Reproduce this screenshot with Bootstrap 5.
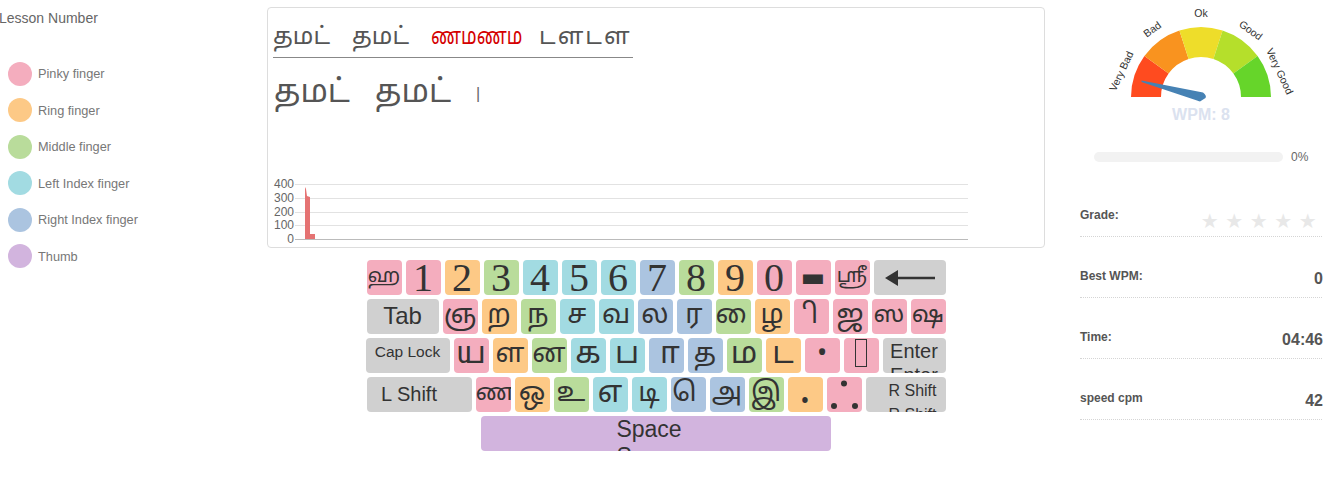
<!DOCTYPE html>
<html lang="ta">
<head>
<meta charset="utf-8">
<title>Typing lesson</title>
<link href="https://cdn.jsdelivr.net/npm/bootstrap@5.3.0/dist/css/bootstrap.min.css" rel="stylesheet">
<style>
html,body{height:492px;overflow:hidden;background:#fff}
body{font-family:"Liberation Sans",Arial,sans-serif;color:#333;font-size:12px}
.leftcol{width:267px;flex:none;color:#777;font-size:12.75px}
.lessonlbl{font-size:14px;line-height:16px;margin:10px 0 0 -1px;color:#666}
.legend{margin:29.5px 0 0 8px}
.legrow{height:36.5px;display:flex;align-items:center;gap:6px}
.legdot{width:24px;height:24px;border-radius:50%;flex:none}
.midcol{width:778px;flex:none;padding-top:7px}
.typecard{height:241px;border-color:#ddd;border-radius:4px;padding:0 5px;overflow:hidden}
.srcline{font-family:"Noto Sans Tamil","Lohit Tamil","Liberation Sans",sans-serif;font-size:24px;line-height:38px;height:44px;margin-top:6px;width:360px;border-bottom:1px solid #888;color:#555;padding-top:5px;gap:22px}
.srcline span{white-space:nowrap;flex:none}
.narrowred{display:inline-block;width:90px;transform:scaleX(.76);transform-origin:left center;color:#d40000;margin-right:-4px}
.widegrp{letter-spacing:2px}
.typedline{font-family:"Noto Sans Tamil","Lohit Tamil","Liberation Sans",sans-serif;font-size:32px;line-height:50px;height:111px;margin-top:7px;color:#555;padding:4px 0 0 1px;gap:25px}
.typedline span{flex:none}
.caretbar{font-size:16px;font-family:"Liberation Sans",sans-serif;color:#666}
.speedchart{display:block;margin:0 0 0 -5px}
.kboard{width:579px;margin:12px auto 0;display:flex;flex-direction:column;gap:4px}
.kbrow{display:flex;gap:4px;justify-content:space-between}
.kbkey{flex:none;width:35px;height:35px;border-radius:4px;overflow:hidden;text-align:center;color:#333;font-family:"Noto Sans Tamil","Lohit Tamil","Liberation Sans",sans-serif;font-size:27px;line-height:35px}
.kbkey svg{display:block}
.t-s{font-size:20px}
.t-m{font-size:24px}
.t-l{font-size:31px}
.numkey{font-family:"Liberation Serif",serif;font-size:40px;line-height:36px}
.barkey{font-family:"DejaVu Sans",sans-serif;font-size:26px}
.bigdot{font-size:44px;line-height:30px}
.tofubox{display:inline-block;width:12px;height:28px;border:1px solid #333;vertical-align:middle;margin-top:-3px}
.ctl{background:#d0d0d0;font-family:"Liberation Sans",sans-serif;color:#333}
.c-p{background:#f4adbe}.c-r{background:#fdc986}.c-m{background:#b9dc9b}.c-l{background:#a2dbe2}.c-i{background:#abc4e0}.c-t{background:#d2b4de}
.bkspk{width:72px;display:flex;align-items:center;justify-content:center}
.tabk{width:72px;font-size:24px;line-height:33px}
.capk{width:84px;font-size:15.5px;line-height:28px;margin-left:-1px}
.entk{width:63px;font-size:20px;line-height:24px;padding-top:1px}
.lsk{width:105px;font-size:20px;line-height:35px;padding-right:20px}
.rsk{width:80px;font-size:16px;line-height:24px;padding:2px 0 0 14px}
.spk{width:350px;background:#d2b4de;font-family:"Liberation Sans",sans-serif;font-size:23px;line-height:27px;padding-right:14px}
.rightcol{width:242px;margin-left:35px;flex:none}
.gaugesvg{display:block}
.pctrow{margin:21px 0 0 14px;display:flex;align-items:center;gap:8px;height:12px;color:#666}
.pctrow .progress{width:189px;height:10px;border-radius:5px;background:#f2f2f2}
.statlist{margin-top:35px}
.statrow{height:61px;display:flex;justify-content:space-between;border-bottom:1px dotted #d5d5d5;padding-top:32px;color:#555}
.statname{font-weight:700;font-size:12px;line-height:14px}
.statval{font-weight:700;font-size:16px;line-height:18px;margin-right:-1px;margin-top:1px}
.firststat{height:39px;padding-top:10px}
.starset{color:#e8e8e8;font-family:"DejaVu Sans",sans-serif;font-size:20px;line-height:20px;display:flex;gap:4px;margin:3px 4px 0 0}
.starset span{width:20.5px;text-align:center}
</style>
</head>
<body>
<div class="d-flex">
  <div class="leftcol">
    <div class="lessonlbl">Lesson Number</div>
    <div class="legend">
      <div class="legrow"><span class="legdot c-p"></span>Pinky finger</div>
      <div class="legrow"><span class="legdot c-r"></span>Ring finger</div>
      <div class="legrow"><span class="legdot c-m"></span>Middle finger</div>
      <div class="legrow"><span class="legdot c-l"></span>Left Index finger</div>
      <div class="legrow"><span class="legdot c-i"></span>Right Index finger</div>
      <div class="legrow"><span class="legdot c-t"></span>Thumb</div>
    </div>
  </div>
  <div class="midcol">
    <div class="card typecard">
      <div class="srcline d-flex"><span>தமட்</span><span>தமட்</span><span class="narrowred">ணமணம</span><span class="widegrp">டளடள</span></div>
      <div class="typedline d-flex"><span>தமட்</span><span>தமட்</span><span class="caretbar">|</span></div>
      <svg class="speedchart" width="776" height="70" viewBox="0 0 776 70">
        <path d="M27 8.5H700M27 22.5H700M27 36.5H700M27 49.5H700" stroke="#e2e2e2"/>
        <path d="M27 63.5H700" stroke="#bbb"/>
        <path d="M37 11L38 13L39 20L42 21L42 58L47 58L47 63H37Z" fill="#e57373"/>
        <g font-family="Liberation Sans" font-size="12" fill="#666" text-anchor="end">
          <text x="26" y="12">400</text><text x="26" y="26">300</text><text x="26" y="40">200</text><text x="26" y="53">100</text><text x="26" y="67">0</text>
        </g>
      </svg>
    </div>
    <div class="kboard">
      <div class="kbrow">
        <div class="kbkey t-s c-p">ஹ</div><div class="kbkey numkey c-p">1</div><div class="kbkey numkey c-r">2</div><div class="kbkey numkey c-m">3</div><div class="kbkey numkey c-l">4</div><div class="kbkey numkey c-l">5</div><div class="kbkey numkey c-l">6</div><div class="kbkey numkey c-i">7</div><div class="kbkey numkey c-m">8</div><div class="kbkey numkey c-r">9</div><div class="kbkey numkey c-p">0</div><div class="kbkey barkey c-p">▬</div><div class="kbkey t-s c-p">ஸ்ரீ</div><div class="kbkey ctl bkspk" role="img" aria-label="Backspace"><svg width="50" height="16" viewBox="0 0 50 16"><path d="M0 8L13 0V6.7H50V9.3H13V16Z" fill="#333"/></svg></div>
      </div>
      <div class="kbrow">
        <div class="kbkey ctl tabk">Tab</div><div class="kbkey c-p">ஞ</div><div class="kbkey c-r">ற</div><div class="kbkey c-m">ந</div><div class="kbkey c-l">ச</div><div class="kbkey c-l">வ</div><div class="kbkey c-i">ல</div><div class="kbkey c-i">ர</div><div class="kbkey c-m">&nbsp;ை</div><div class="kbkey c-r">ழ</div><div class="kbkey c-p">&nbsp;ி</div><div class="kbkey c-p">ஜ</div><div class="kbkey t-m c-p">ஸ</div><div class="kbkey t-m c-p">ஷ</div>
      </div>
      <div class="kbrow">
        <div class="kbkey ctl capk">Cap Lock<br>Cap Lock</div><div class="kbkey t-l c-p">ய</div><div class="kbkey c-r">ள</div><div class="kbkey c-m">ன</div><div class="kbkey t-l c-l">க</div><div class="kbkey t-l c-l">ப</div><div class="kbkey t-l c-i">&nbsp;ா</div><div class="kbkey c-i">த</div><div class="kbkey t-l c-m">ம</div><div class="kbkey t-l c-r">ட</div><div class="kbkey c-p">•</div><div class="kbkey c-p"><span class="tofubox"></span></div><div class="kbkey ctl entk">Enter<br>Enter</div>
      </div>
      <div class="kbrow">
        <div class="kbkey ctl lsk">L Shift<br>L Shift</div><div class="kbkey t-m c-p">ண</div><div class="kbkey c-r">ஒ</div><div class="kbkey c-m">உ</div><div class="kbkey t-l c-l">எ</div><div class="kbkey c-l">டி</div><div class="kbkey c-i">&nbsp;ெ</div><div class="kbkey c-i">அ</div><div class="kbkey c-m">இ</div><div class="kbkey bigdot c-r">.</div><div class="kbkey c-p" role="img" aria-label="ஃ"><svg width="35" height="35" viewBox="0 0 35 35"><g fill="#333"><circle cx="17" cy="6.5" r="3"/><circle cx="7" cy="29" r="3"/><circle cx="28" cy="29" r="3"/></g></svg></div><div class="kbkey ctl rsk">R Shift<br>R Shift</div>
      </div>
      <div class="kbrow justify-content-center">
        <div class="kbkey spk">Space<br>Space</div>
      </div>
    </div>
  </div>
  <div class="rightcol">
    <svg class="gaugesvg" width="242" height="130" viewBox="0 0 242 130">
      <path d="M51 97A70 70 0 0 1 64.4 55.9L88.6 73.5A40 40 0 0 0 81 97Z" fill="#ff4b1f"/>
      <path d="M64.4 55.9A70 70 0 0 1 99.4 30.4L108.6 58.96A40 40 0 0 0 88.6 73.5Z" fill="#f9931f"/>
      <path d="M99.4 30.4A70 70 0 0 1 142.6 30.4L133.4 58.96A40 40 0 0 0 108.6 58.96Z" fill="#eedd2a"/>
      <path d="M142.6 30.4A70 70 0 0 1 177.6 55.9L153.4 73.5A40 40 0 0 0 133.4 58.96Z" fill="#b5df2b"/>
      <path d="M177.6 55.9A70 70 0 0 1 191 97H161A40 40 0 0 0 153.4 73.5Z" fill="#66d52a"/>
      <path d="M61.5 80.5L123 92.5Q127 95.5 125.5 98L120 101.5Q118 101 117 100.5L61.5 82Z" fill="#4682b4"/>
      <g font-family="Liberation Sans" font-size="10.5" fill="#333" text-anchor="middle">
        <text transform="translate(41 71) rotate(-65)" y="4">Very Bad</text>
        <text transform="translate(72 29) rotate(-36)" y="4">Bad</text>
        <text x="121" y="17">Ok</text>
        <text transform="translate(171 30) rotate(36)" y="4">Good</text>
        <text transform="translate(200 71) rotate(65)" y="4">Very Good</text>
      </g>
      <text x="121" y="120" font-family="Liberation Sans" font-weight="700" font-size="16" fill="#dbe2ef" text-anchor="middle">WPM: 8</text>
    </svg>
    <div class="pctrow">
      <div class="progress"><div class="progress-bar" style="width:0%"></div></div>
      <span>0%</span>
    </div>
    <div class="statlist">
      <div class="statrow firststat"><span class="statname">Grade:</span><span class="starset"><span>★</span><span>★</span><span>★</span><span>★</span><span>★</span></span></div>
      <div class="statrow"><span class="statname">Best WPM:</span><span class="statval">0</span></div>
      <div class="statrow"><span class="statname">Time:</span><span class="statval">04:46</span></div>
      <div class="statrow"><span class="statname">speed cpm</span><span class="statval">42</span></div>
    </div>
  </div>
</div>
<script src="https://cdn.jsdelivr.net/npm/bootstrap@5.3.0/dist/js/bootstrap.bundle.min.js"></script>
</body>
</html>
